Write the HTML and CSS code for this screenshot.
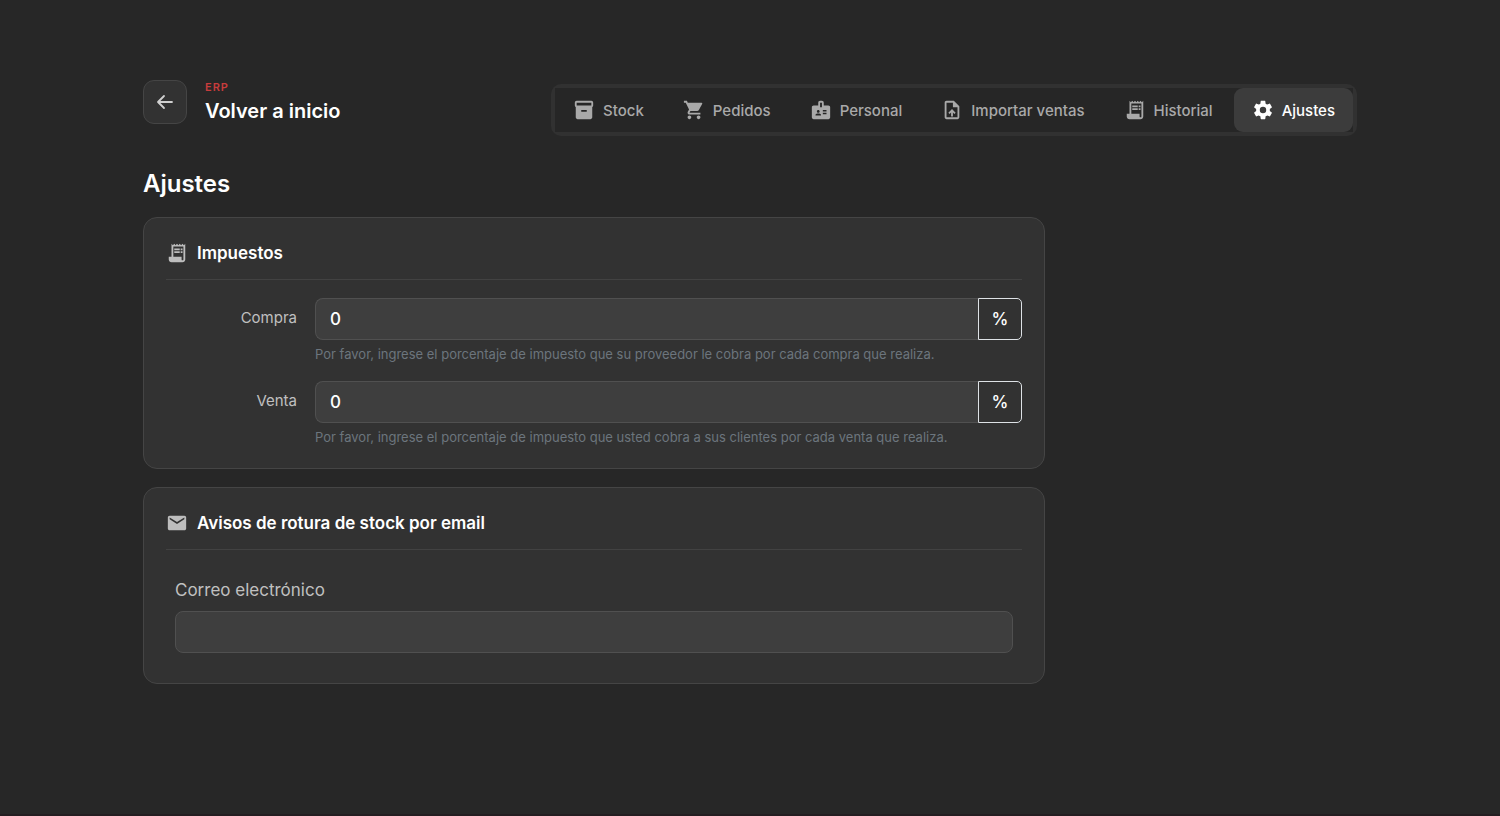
FILE: index.html
```html
<!DOCTYPE html>
<html lang="es">
<head>
<meta charset="utf-8">
<meta name="viewport" content="width=device-width, initial-scale=1">
<title>Ajustes</title>
<link rel="stylesheet" href="styles.css">
</head>
<body>
<svg class="sprite" aria-hidden="true">
  <symbol id="receipt" viewBox="0 0 24 24"><path d="M19.5 3.5L18 2l-1.5 1.5L15 2l-1.5 1.5L12 2l-1.5 1.5L9 2 7.5 3.5 6 2v14H3v3c0 1.66 1.34 3 3 3h12c1.66 0 3-1.34 3-3V2l-1.5 1.5zM19 19c0 .55-.45 1-1 1s-1-.45-1-1v-3H8V5h11v14zM9 7h6v2H9zM16 7h2v2h-2zM9 10h6v2H9zM16 10h2v2h-2z"/></symbol>
</svg>
<div class="page">
  <header class="header">
    <div class="brand">
      <button class="back" type="button" aria-label="Volver">
        <svg class="back-icon" viewBox="0 0 20 20"><path d="M17 10H3.500M9 4L3 10l6 6"/></svg>
      </button>
      <div class="brand-text">
        <span class="eyebrow">ERP</span>
        <span class="brand-title">Volver a inicio</span>
      </div>
    </div>
    <nav class="tabs">
      <div class="tab-list">
        <a class="tab" href="#stock"><svg class="icon" viewBox="0 0 24 24"><path d="M20 2H4c-1 0-2 .9-2 2v3.010c0 .72.43 1.340 1 1.690V20c0 1.100 1.100 2 2 2h14c.9 0 2-.9 2-2V8.700c.57-.35 1-.97 1-1.690V4c0-1.100-1-2-2-2zm-5 12H9v-2h6v2zm5-7H4V4h16v3z"/></svg>Stock</a>
        <a class="tab" href="#pedidos"><svg class="icon" viewBox="0 0 24 24"><path d="M7 18c-1.100 0-1.990.9-1.990 2S5.900 22 7 22s2-.9 2-2-.9-2-2-2zM1 2v2h2l3.600 7.590-1.350 2.450c-.16.28-.25.61-.25.96 0 1.100.9 2 2 2h12v-2H7.420c-.14 0-.25-.11-.25-.25l.03-.12.9-1.630h7.450c.75 0 1.410-.41 1.750-1.030l3.580-6.490A1.003 1.003 0 0 0 20 4H5.210l-.94-2H1zm16 16c-1.100 0-1.990.9-1.990 2s.89 2 1.990 2 2-.9 2-2-.9-2-2-2z"/></svg>Pedidos</a>
        <a class="tab" href="#personal"><svg class="icon" viewBox="0 0 24 24"><path d="M20 7h-5V4c0-1.100-.9-2-2-2h-2c-1.100 0-2 .9-2 2v3H4c-1.100 0-2 .9-2 2v11c0 1.100.9 2 2 2h16c1.100 0 2-.9 2-2V9c0-1.100-.9-2-2-2zM9 12c.83 0 1.500.67 1.500 1.500S9.830 15 9 15s-1.500-.67-1.500-1.500S8.170 12 9 12zm3 6H6v-.75c0-1 2-1.500 3-1.500s3 .5 3 1.500V18zm1-9h-2V4h2v5zm5 7.500h-4V15h4v1.500zm0-3h-4V12h4v1.500z"/></svg>Personal</a>
        <a class="tab" href="#importar"><svg class="icon" viewBox="0 0 24 24"><path d="M14 2H6c-1.100 0-1.990.9-1.990 2L4 20c0 1.100.89 2 1.990 2H18c1.100 0 2-.9 2-2V8l-6-6zm4 18H6V4h7v5h5v11zM8 15.010l1.410 1.410L11 14.840V19h2v-4.160l1.590 1.590L16 15.010 12.010 11 8 15.010z"/></svg>Importar ventas</a>
        <a class="tab" href="#historial"><svg class="icon"><use href="#receipt"/></svg>Historial</a>
        <a class="tab tab-active" href="#ajustes" aria-current="page"><svg class="icon" viewBox="0 0 24 24"><path d="M12,15.5A3.5,3.5 0 0,1 8.5,12A3.5,3.5 0 0,1 12,8.5A3.5,3.5 0 0,1 15.5,12A3.5,3.5 0 0,1 12,15.5M19.43,12.97C19.47,12.65 19.5,12.33 19.5,12C19.5,11.67 19.47,11.34 19.43,11L21.54,9.37C21.73,9.22 21.78,8.95 21.66,8.73L19.66,5.27C19.54,5.05 19.27,4.96 19.05,5.05L16.56,6.05C16.04,5.66 15.5,5.32 14.87,5.07L14.5,2.42C14.46,2.18 14.25,2 14,2H10C9.75,2 9.54,2.18 9.5,2.42L9.13,5.07C8.5,5.32 7.96,5.66 7.44,6.05L4.95,5.05C4.73,4.96 4.46,5.05 4.34,5.27L2.34,8.73C2.21,8.95 2.27,9.22 2.46,9.37L4.57,11C4.53,11.34 4.5,11.67 4.5,12C4.5,12.33 4.53,12.65 4.57,12.97L2.46,14.63C2.27,14.78 2.21,15.05 2.34,15.27L4.34,18.73C4.46,18.95 4.73,19.03 4.95,18.95L7.44,17.94C7.96,18.34 8.5,18.68 9.13,18.93L9.5,21.58C9.54,21.82 9.75,22 10,22H14C14.25,22 14.46,21.82 14.5,21.58L14.87,18.93C15.5,18.67 16.04,18.34 16.56,17.94L19.05,18.95C19.27,19.03 19.54,18.95 19.66,18.73L21.66,15.27C21.78,15.05 21.73,14.78 21.54,14.63L19.43,12.97Z"/></svg>Ajustes</a>
      </div>
    </nav>
  </header>

  <main class="content">
    <h1 class="title">Ajustes</h1>

    <section class="card">
      <h2 class="card-title"><svg class="icon"><use href="#receipt"/></svg>Impuestos</h2>
      <div class="field-row">
        <label class="row-label" for="compra">Compra</label>
        <div class="field">
          <div class="group">
            <input class="input group-input" id="compra" type="text" inputmode="decimal" value="0">
            <span class="addon">%</span>
          </div>
          <p class="hint">Por favor, ingrese el porcentaje de impuesto que su proveedor le cobra por cada compra que realiza.</p>
        </div>
      </div>
      <div class="field-row">
        <label class="row-label" for="venta">Venta</label>
        <div class="field">
          <div class="group">
            <input class="input group-input" id="venta" type="text" inputmode="decimal" value="0">
            <span class="addon">%</span>
          </div>
          <p class="hint">Por favor, ingrese el porcentaje de impuesto que usted cobra a sus clientes por cada venta que realiza.</p>
        </div>
      </div>
    </section>

    <section class="card">
      <h2 class="card-title"><svg class="icon" viewBox="0 0 24 24"><path d="M20 4H4c-1.100 0-1.990.9-1.990 2L2 18c0 1.100.9 2 2 2h16c1.100 0 2-.9 2-2V6c0-1.100-.9-2-2-2zm0 4l-8 5-8-5V6l8 5 8-5v2z"/></svg>Avisos de rotura de stock por email</h2>
      <div class="email">
        <label class="email-label" for="correo">Correo electrónico</label>
        <input class="input" id="correo" type="email">
      </div>
    </section>
  </main>
</div>
</body>
</html>
```
FILE: styles.css
```css
* { box-sizing: border-box; }

body {
  margin: 0;
  min-height: 100vh;
  background: #272727;
  border-bottom: 2px solid #241e21;
  color: #fff;
  font-family: Inter, "Liberation Sans", sans-serif;
}

.sprite { display: none; }

.page {
  max-width: 1214px;
  margin: 0 auto;
  padding: 80px 0 40px;
}

.header {
  display: flex;
  align-items: flex-start;
  justify-content: space-between;
  gap: 24px;
}

.brand { display: flex; gap: 18px; }

.back {
  display: grid;
  place-items: center;
  width: 44px;
  height: 44px;
  padding: 0;
  border: 1px solid #454545;
  border-radius: 11px;
  background: #323232;
  color: #d0d0d0;
}

.back-icon {
  width: 20px;
  height: 20px;
  fill: none;
  stroke: currentColor;
  stroke-width: 1.8;
  stroke-linecap: round;
  stroke-linejoin: round;
}

.brand-text { display: flex; flex-direction: column; }

.eyebrow {
  color: #c83c3c;
  font-size: 11px;
  font-weight: 600;
  line-height: 14px;
  letter-spacing: 1px;
}

.brand-title {
  font-size: 20px;
  font-weight: 600;
  line-height: 34px;
}

.tabs {
  margin-top: 4px;
  padding: 4px;
  border-radius: 10px;
  background: #313131;
}

.tab-list {
  display: flex;
  gap: 3px;
  background: #262626;
}

.tab {
  display: flex;
  align-items: center;
  gap: 8px;
  height: 44px;
  padding: 0 18px;
  border-radius: 9px;
  color: #a9a9a9;
  font-size: 15px;
  font-weight: 500;
  text-decoration: none;
  white-space: nowrap;
}

.tab-active { background: #3c3c3c; color: #fff; }

.icon {
  flex: none;
  width: 22px;
  height: 22px;
  fill: currentColor;
}

.content { max-width: 902px; }

.title {
  margin: 30px 0 15px;
  font-size: 24px;
  font-weight: 600;
  line-height: 36px;
}

.card {
  margin-bottom: 18px;
  padding: 22px;
  border: 1px solid #454545;
  border-radius: 14px;
  background: #323232;
}

.card-title {
  display: flex;
  align-items: center;
  gap: 9px;
  margin: 0 0 18px;
  padding-bottom: 13px;
  border-bottom: 1px solid #424242;
  font-size: 17px;
  font-weight: 600;
  line-height: 26px;
}

.card-title .icon { color: #bdbdbd; }

.field-row { display: flex; gap: 18px; }
.field-row + .field-row { margin-top: 18px; }

.row-label {
  flex: none;
  width: 131px;
  color: #c0c0c0;
  font-size: 15px;
  line-height: 40px;
  text-align: right;
}

.field { flex: 1; min-width: 0; }
.group { display: flex; }

.input {
  width: 100%;
  height: 42px;
  padding: 0 14px;
  border: 1px solid #505050;
  border-radius: 8px;
  background: #3e3e3e;
  color: #fff;
  font: 500 17px/24px Inter, "Liberation Sans", sans-serif;
}

.group-input {
  flex: 1;
  border-right: 0;
  border-radius: 8px 0 0 8px;
}

.addon {
  display: grid;
  place-items: center;
  width: 44px;
  border: 1px solid #dee2e6;
  border-radius: 0 5px 5px 0;
  font-size: 17px;
  font-weight: 500;
}

.hint {
  margin: 5px 0 0;
  color: #6c757d;
  font-size: 13px;
  line-height: 18px;
}

.email { padding: 9px 9px 8px; }

.email-label {
  display: block;
  margin-bottom: 8px;
  color: #c0c0c0;
  font-size: 17px;
  line-height: 26px;
}
```
